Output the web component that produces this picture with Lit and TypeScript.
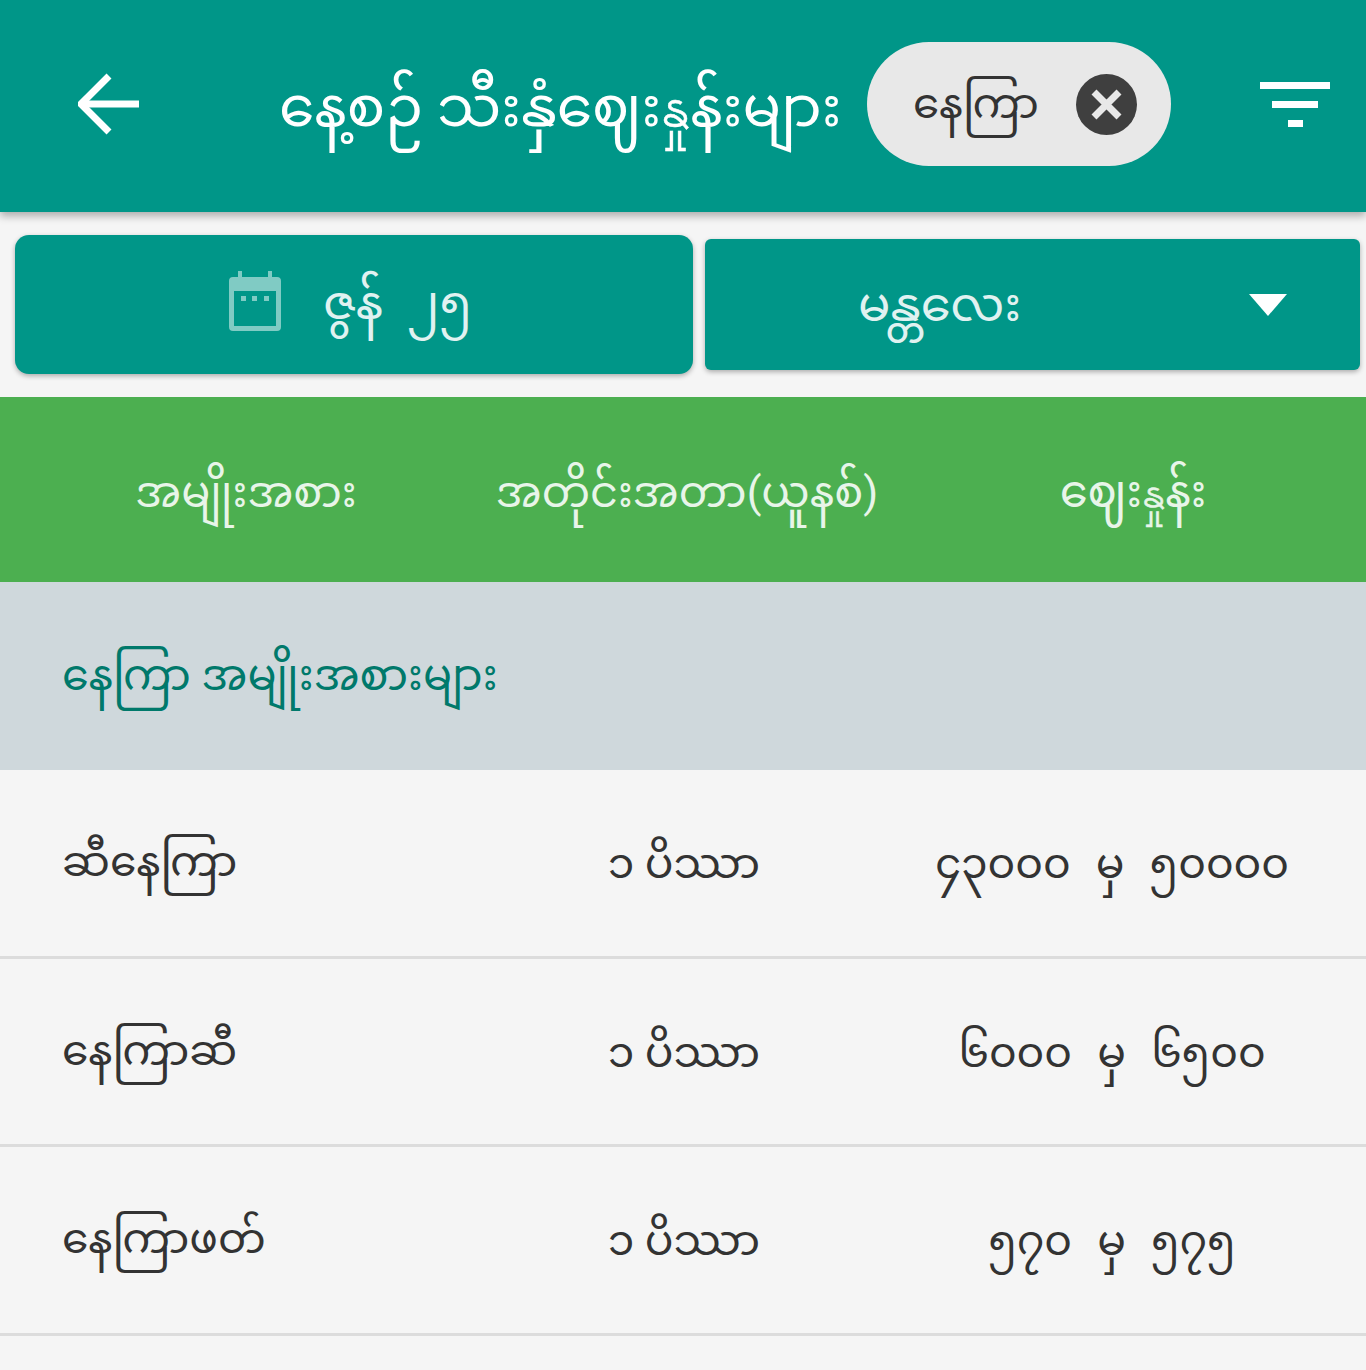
import { LitElement, html, css } from "lit";
import { customElement } from "lit/decorators.js";

const ROWS = [
  ["ဆီနေကြာ", "၁ ပိဿာ", "၄၃၀၀၀", "၅၀၀၀၀"],
  ["နေကြာဆီ", "၁ ပိဿာ", "၆၀၀၀", "၆၅၀၀"],
  ["နေကြာဖတ်", "၁ ပိဿာ", "၅၇၀", "၅၇၅"],
];

@customElement("app-root")
export class AppRoot extends LitElement {
  static styles = css`
    :host { display: block; height: 1370px; overflow: hidden; background: #f5f5f5; font-family: Roboto, "Noto Sans Myanmar", sans-serif; font-size: 43px; color: #333; }
    * { box-sizing: border-box; }
    .alt { font-family: "DejaVu Sans", sans-serif; -webkit-text-stroke: 0.5px currentColor; }
    .header { height: 212px; background: #009688; display: flex; align-items: center; padding: 0 36px 0 78px; box-shadow: 0 4px 8px rgba(0,0,0,.3); position: relative; }
    .arrow { width: 62px; height: 62px; flex: none; margin-top: -4px; }
    .title { margin-left: 139px; color: #fff; font-size: 57px; white-space: nowrap; flex: none; width: 588px; padding-top: 14px; }
    .chip { width: 304px; height: 124px; border-radius: 62px; background: #e8e8e8; display: flex; align-items: center; padding: 0 34px 0 46px; justify-content: space-between; flex: none; margin-right: auto; margin-top: -4px; font-size: 42px; }
    .chip span { padding-top: 8px; }
    .close { width: 61px; height: 61px; flex: none; }
    .filter { width: 70px; display: flex; flex-direction: column; align-items: center; flex: none; gap: 12px; margin-top: -4px; }
    .filter i { display: block; height: 7px; background: #fff; }
    .bar { display: flex; align-items: center; gap: 12px; padding: 23px 6px 23px 15px; font-size: 48px; }
    .btn { background: #009688; display: flex; align-items: center; box-shadow: 0 2px 5px rgba(0,0,0,.3); color: #e0f2f1; }
    .date { flex: 0 0 678px; height: 139px; border-radius: 14px; padding-left: 213px; }
    .date svg { width: 54px; height: 60px; flex: none; margin-top: -8px; }
    .date span { margin-left: 41px; white-space: pre; padding-top: 6px; }
    .sel { flex: 1; height: 131px; border-radius: 6px; padding: 0 73px 0 153px; justify-content: space-between; }
    .sel span { padding-top: 10px; }
    .sel svg { width: 38px; height: 22px; }
    .thead { height: 185px; background: #4caf50; display: grid; grid-template-columns: 492px 390px 1fr; align-items: center; color: #e8f5e9; text-align: center; padding-top: 14px; }
    .thead div:last-child { padding-left: 18px; font-size: 45px; }
    .section { height: 188px; background: #cfd8dc; color: #00796b; display: flex; align-items: center; padding: 8px 0 0 62px; }
    .row { height: 188.5px; display: grid; grid-template-columns: 498px 248px 1fr; align-items: center; border-bottom: 3px solid #dcdcdc; padding: 4px 0 0 62px; font-size: 42.5px; }
    .row .a { white-space: nowrap; padding-top: 4px; }
    .row .b { text-align: center; padding-top: 8px; }
    .row .c { text-align: center; padding: 8px 0 0 50px; white-space: pre; word-spacing: 2px; }
  `;
  render() {
    return html`
      <div class="header">
        <svg class="arrow" viewBox="0 0 62 62" fill="none" stroke="#fff" stroke-width="7"><path d="M61 31H4"/><path d="M31 3 3 31l28 28"/></svg>
        <div class="title">နေ့စဉ် သီးနှံဈေး<span class="alt">နှု</span>န်းများ</div>
        <div class="chip"><span>နေကြာ</span>
          <svg class="close" viewBox="0 0 61 61"><circle cx="30.5" cy="30.5" r="30.5" fill="#3f3f3f"/><path d="M18 18 43 43M43 18 18 43" stroke="#e8e8e8" stroke-width="7"/></svg>
        </div>
        <div class="filter"><i style="width:70px"></i><i style="width:46px"></i><i style="width:15px"></i></div>
      </div>
      <div class="bar">
        <div class="btn date">
          <svg viewBox="0 0 54 60" fill="none"><path d="M10 0h4v6h26V0h4v6h5q4 0 4 4v46q0 4-4 4H5q-4 0-4-4V10q0-4 4-4h5z" fill="#80cbc4"/><rect x="6" y="20" width="42" height="35" fill="#009688"/><path d="M13 25h5v5h-5zM24 25h5v5h-5zM36 25h5v5h-5z" fill="#80cbc4"/></svg>
          <span>ဇွန်  ၂၅</span>
        </div>
        <div class="btn sel"><span>မန္တလေး</span>
          <svg viewBox="0 0 38 22"><path d="M0 0h38L19 22z" fill="#fff"/></svg>
        </div>
      </div>
      <div class="thead"><div>အမျိုးအစား</div><div>အတိုင်းအတာ(ယူနစ်)</div><div>ဈေး<span class="alt">နှု</span>န်း</div></div>
      <div class="section">နေကြာ အမျိုးအစားများ</div>
      ${ROWS.map(r => html`<div class="row"><div class="a">${r[0]}</div><div class="b">${r[1]}</div><div class="c">${r[2]}  မှ  ${r[3]}</div></div>`)}
    `;
  }
}
